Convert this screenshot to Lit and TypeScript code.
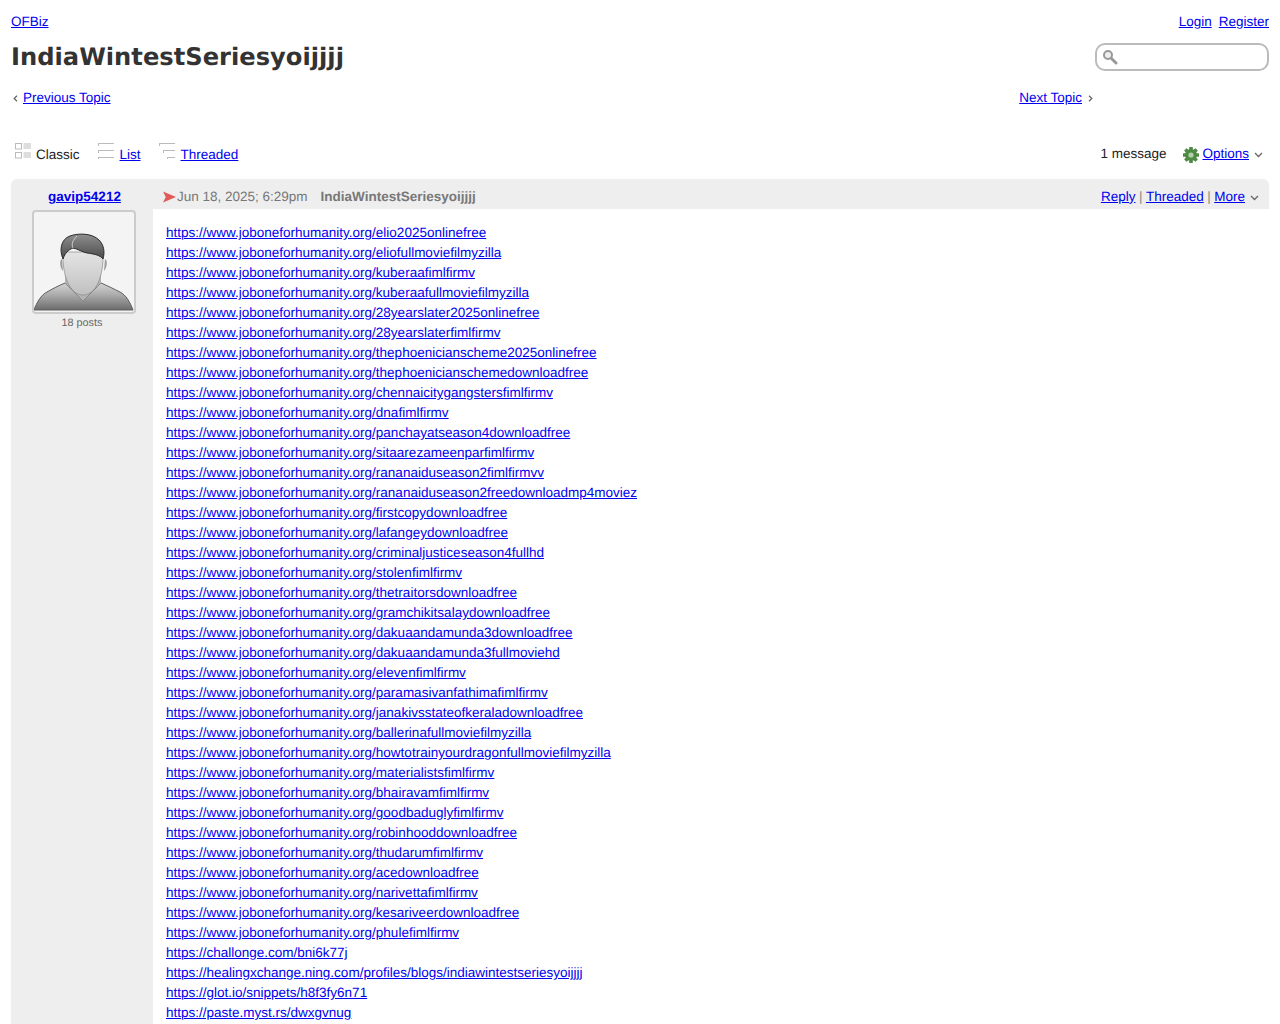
import { LitElement, html, css, svg } from "lit";
import { customElement } from "lit/decorators.js";

const J = "https://www.joboneforhumanity.org/";
const LINKS = [
  "elio2025onlinefree","eliofullmoviefilmyzilla","kuberaafimlfirmv","kuberaafullmoviefilmyzilla","28yearslater2025onlinefree","28yearslaterfimlfirmv","thephoenicianscheme2025onlinefree","thephoenicianschemedownloadfree","chennaicitygangstersfimlfirmv","dnafimlfirmv","panchayatseason4downloadfree","sitaarezameenparfimlfirmv","rananaiduseason2fimlfirmvv","rananaiduseason2freedownloadmp4moviez","firstcopydownloadfree","lafangeydownloadfree","criminaljusticeseason4fullhd","stolenfimlfirmv","thetraitorsdownloadfree","gramchikitsalaydownloadfree","dakuaandamunda3downloadfree","dakuaandamunda3fullmoviehd","elevenfimlfirmv","paramasivanfathimafimlfirmv","janakivsstateofkeraladownloadfree","ballerinafullmoviefilmyzilla","howtotrainyourdragonfullmoviefilmyzilla","materialistsfimlfirmv","bhairavamfimlfirmv","goodbaduglyfimlfirmv","robinhooddownloadfree","thudarumfimlfirmv","acedownloadfree","narivettafimlfirmv","kesariveerdownloadfree","phulefimlfirmv",
].map((s) => J + s).concat([
  "https://challonge.com/bni6k77j",
  "https://healingxchange.ning.com/profiles/blogs/indiawintestseriesyoijjjj",
  "https://glot.io/snippets/h8f3fy6n71",
  "https://paste.myst.rs/dwxgvnug",
]);

const chevronDown = html`<svg class="chev" width="9" height="6" viewBox="0 0 9 6"><path d="M1 1l3.5 3.5L8 1" fill="none" stroke="#666" stroke-width="1.3"/></svg>`;

const gear = html`<svg class="gear" width="16" height="16" viewBox="0 0 16 16"><g fill="#4f8a45">${[0, 45, 90, 135].map((a) => svg`<rect x="6.2" y="0" width="3.6" height="16" rx=".5" transform="rotate(${a} 8 8)"/>`)}<circle cx="8" cy="8" r="6"/></g><circle cx="8" cy="8" r="2.6" fill="#b3d0ac"/></svg>`;

const avatar = html`<svg width="100" height="100" viewBox="0 0 100 100">
  <defs>
    <linearGradient id="b" x1="0" y1="0" x2="0" y2="1"><stop offset="0" stop-color="#d4d4d4"/><stop offset=".45" stop-color="#aaaaaa"/><stop offset="1" stop-color="#6c6c6c"/></linearGradient>
    <linearGradient id="h" x1="0" y1="0" x2="0" y2="1"><stop offset="0" stop-color="#8f8f8f"/><stop offset="1" stop-color="#4a4a4a"/></linearGradient>
    <linearGradient id="f" x1="0" y1="0" x2="0" y2="1"><stop offset="0" stop-color="#e4e4e4"/><stop offset="1" stop-color="#c0c0c0"/></linearGradient>
  </defs>
  <path d="M0 98C3 90 7 83 13 80C18 77 24 74 31 71L49 89L67 71C74 74 80 77 86 80C92 83 96 90 99 98Z" fill="url(#b)" stroke="#5f5f5f" stroke-width="1"/>
  <path d="M31 62L31 71L49 89L67 71L67 62Z" fill="#b4b4b4"/>
  <path d="M29 40C28 64 36 83 49 83C62 83 70 64 69 40Z" fill="url(#f)" stroke="#8a8a8a" stroke-width=".7"/>
  <path d="M28 47C25 48 26 56 29 59ZM71 47C74 48 73 56 70 59Z" fill="#9d9d9d"/>
  <path d="M29 47C25 38 27 27 36 24C44 21 58 21 65 28C70 33 71 40 69 47C66 43 60 42 53 41C48 40 44 37 39 36C34 38 31 41 29 47Z" fill="url(#h)" stroke="#2e2e2e" stroke-width="1"/>
  <path d="M43 24C39 28 37 32 39 36" fill="none" stroke="#d8d8d8" stroke-width=".9"/>
</svg>`;

@customElement("app-root")
export class AppRoot extends LitElement {
  static styles = css`
    :host { display: block; font: 13.5px/20px "Liberation Sans", Arial, sans-serif; text-rendering: geometricPrecision; color: #222; height: 1024px; overflow: hidden; box-sizing: border-box; padding: 0 11px; }
    a { color: #0000ee; text-decoration: underline; }
    .top { display: flex; justify-content: space-between; padding-top: 12px; height: 20px; }
    .top .right { display: flex; gap: 7px; }
    .head { display: flex; justify-content: space-between; align-items: center; margin-top: 6px; height: 36px; }
    h1 { margin: 2px 0 0; font: bold 24.2px/36px "DejaVu Sans", Verdana, sans-serif; color: #333; }
    .search { display: flex; align-items: center; box-sizing: border-box; width: 174px; height: 28px; margin-top: 2px; border: 2px solid #bbb; border-radius: 10px; padding-left: 5px; }
    .nav { display: flex; justify-content: space-between; margin-top: 14px; height: 20px; padding-right: 176px; }
    .nav .l { display: flex; align-items: center; gap: 6px; }
    .nav .l:first-child { padding-left: 2px; gap: 5px; }
    .tabs { display: flex; justify-content: space-between; align-items: center; margin-top: 33px; height: 26px; }
    .views { display: flex; gap: 18px; }
    .view { display: flex; align-items: center; gap: 6px; padding-top: 2px; }
    .view:first-child { gap: 5px; padding-left: 4px; }
    .view svg { margin-top: -8px; }
    .opts { display: flex; align-items: center; padding-right: 6px; margin-top: -1px; }
    .opts .count { margin-right: 17px; }
    .gear { margin-right: 3px; margin-top: 2px; }
    .chev { margin-left: 5px; margin-top: 2px; }
    .post { display: grid; grid-template-columns: 142px 1fr; margin-top: 12px; }
    .side { background: #eeeeee; border-radius: 6px 0 0 0; display: flex; flex-direction: column; align-items: center; padding-top: 8px; min-height: 846px; }
    .user { font-weight: bold; margin-left: 5px; }
    .pic { box-sizing: border-box; width: 104px; height: 104px; margin-top: 3px; margin-left: 3px; border: 2px solid #ccc; border-radius: 4px; background: #f4f4f4; overflow: hidden; }
    .pic svg { display: block; }
    .posts { font-size: 10.8px; line-height: 14px; color: #666; margin-top: 2px; }
    .bar { background: #eeeeee; border-radius: 0 6px 0 0; height: 30px; box-sizing: border-box; padding: 5px 10px 0 10px; display: flex; justify-content: space-between; align-items: center; color: #777; }
    .meta { display: flex; align-items: center; }
    .meta svg { margin-right: 1px; }
    .meta b { margin-left: 13px; color: #777; }
    .actions { display: flex; align-items: center; gap: 3.5px; color: #888; }
    .actions .chev { margin-left: 1.5px; }
    .main { min-width: 0; }
    .body { padding: 14px 13px 0; }
    .body a { display: block; width: fit-content; }
  `;

  render() {
    return html`
      <div class="top"><a href="#">OFBiz</a><div class="right"><a href="#">Login</a><a href="#">Register</a></div></div>
      <div class="head">
        <h1>IndiaWintestSeriesyoijjjj</h1>
        <div class="search"><svg width="16" height="16" viewBox="0 0 16 16"><circle cx="6" cy="6" r="4" fill="#eee" stroke="#999" stroke-width="2"/><path d="M9.5 9.5L14 14" stroke="#999" stroke-width="3" stroke-linecap="round"/></svg></div>
      </div>
      <div class="nav">
        <div class="l"><svg width="5" height="7" viewBox="0 0 5 7"><path d="M4 .8L1.2 3.5L4 6.2" fill="none" stroke="#666" stroke-width="1.3"/></svg><a href="#">Previous Topic</a></div>
        <div class="l"><a href="#">Next Topic</a><svg width="5" height="7" viewBox="0 0 5 7"><path d="M1 .8L3.8 3.5L1 6.2" fill="none" stroke="#666" stroke-width="1.3"/></svg></div>
      </div>
      <div class="tabs">
        <div class="views">
          <div class="view">
            <svg width="16" height="16" viewBox="0 0 16 16" fill="none" stroke="#bbb"><rect x=".5" y=".5" width="6" height="5.5"/><rect x=".5" y="9.5" width="6" height="5.5"/><path d="M8.5 1H16M8.5 3H16M8.5 5H16M8.5 10H16M8.5 12H16M8.5 14H16"/></svg>
            <span>Classic</span>
          </div>
          <div class="view">
            <svg width="16" height="16" viewBox="0 0 16 16" fill="none" stroke="#bbb"><path d="M0 .5H16M.5 .5V3M0 7.5H16M.5 7.5V10M0 14.5H16M.5 14.5V16"/></svg>
            <a href="#">List</a>
          </div>
          <div class="view">
            <svg width="16" height="16" viewBox="0 0 16 16" fill="none" stroke="#bbb"><path d="M0 .5H16M.5 .5V3M4 7.5H16M4.5 7.5V10M8 14.5H16M8.5 14.5V16"/></svg>
            <a href="#">Threaded</a>
          </div>
        </div>
        <div class="opts"><span class="count">1 message</span>${gear}<a href="#">Options</a>${chevronDown}</div>
      </div>
      <div class="post">
        <div class="side">
          <a class="user" href="#">gavip54212</a>
          <div class="pic">${avatar}</div>
          <div class="posts">18 posts</div>
        </div>
        <div class="main">
          <div class="bar">
            <div class="meta">
              <svg width="13" height="12" viewBox="0 0 14 12"><path d="M0 0L14 6L0 12L3 6Z" fill="#e05a5a"/></svg>
              <span>Jun 18, 2025; 6:29pm</span><b>IndiaWintestSeriesyoijjjj</b>
            </div>
            <div class="actions"><a href="#">Reply</a>|<a href="#">Threaded</a>|<a href="#">More</a>${chevronDown}</div>
          </div>
          <div class="body">${LINKS.map((l) => html`<a href="#">${l}</a>`)}</div>
        </div>
      </div>
    `;
  }
}
